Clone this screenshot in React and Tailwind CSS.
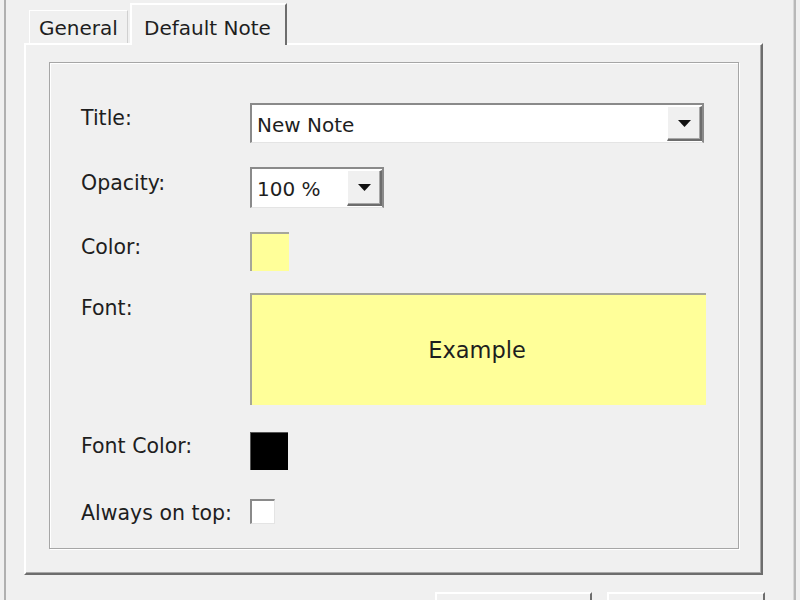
import React from "react";

const font = { fontFamily: '"DejaVu Sans", Verdana, sans-serif' };

const Arrow = () => (
  <svg width="13" height="7" viewBox="0 0 13 7">
    <polygon points="0,0 13,0 6.5,7" fill="#111" />
  </svg>
);

const DropButton = () => (
  <div className="w-[35px] flex items-center justify-center bg-[#f0f0f0] border-t border-l border-white border-r-2 border-b-2 border-r-[#6d6d6d] border-b-[#6d6d6d] shadow-[inset_-1px_-1px_0_#a8a8a8]">
    <Arrow />
  </div>
);

const Combo = ({ value, className }) => (
  <div
    className={`flex bg-white border-t-2 border-l-2 border-r-2 border-[#8a8a8a] border-b border-b-[#e4e4e4] ${className}`}
  >
    <div className="flex-1 flex items-center pl-[5px] pt-[2px] text-[20px] text-[#1e1e1e]">
      {value}
    </div>
    <div className="flex py-[1px]">
      <DropButton />
    </div>
  </div>
);

const Row = ({ label, labelTop, className, children }) => (
  <div className={`flex items-start shrink-0 ${className}`}>
    <div
      className="w-[169px] shrink-0 text-[20.5px] leading-[24px] text-[#1e1e1e]"
      style={{ marginTop: labelTop }}
    >
      {label}
    </div>
    {children}
  </div>
);

export default function App() {
  return (
    <div
      className="w-[800px] h-[600px] bg-[#f0f0f0] overflow-hidden flex"
      style={font}
    >
      <div className="w-[4px] shrink-0" />
      <div className="w-[2px] shrink-0 bg-[#b0b0b0]" />

      <div className="w-[760px] shrink-0 flex flex-col pl-[18px]">
        {/* tabs */}
        <div className="h-[43px] shrink-0 flex items-end pl-[5px] relative z-10">
          <div className="w-[99px] h-[33px] flex items-center pl-[9px] pt-[2px] border-t border-l border-white border-r border-r-[#d0d0d0] text-[20px] text-[#1e1e1e]">
            General
          </div>
          <div className="w-[157px] h-[42px] -mb-[2px] ml-[2px] bg-[#f0f0f0] flex items-start pt-[8px] pl-[12px] border-t-2 border-l-2 border-white border-r-2 border-r-[#6d6d6d] text-[20px] text-[#1e1e1e]">
            Default Note
          </div>
        </div>

        {/* tab panel */}
        <div className="w-[739px] h-[532px] shrink-0 border-t-2 border-l-2 border-white border-r-2 border-b-2 border-r-[#6d6d6d] border-b-[#6d6d6d] shadow-[inset_-1px_-1px_0_#a8a8a8] pl-[23px] pt-[17px]">
          <div className="w-[690px] h-[487px] border border-[#a6a6a6] shadow-[1px_1px_0_#fff,inset_1px_1px_0_#fff] pl-[31px] pt-[40px] flex flex-col">
            <Row label="Title:" labelTop={3}>
              <Combo value="New Note" className="w-[454px] h-[40px]" />
            </Row>
            <Row label="Opacity:" labelTop={4} className="mt-[24px]">
              <Combo value="100 %" className="w-[134px] h-[41px]" />
            </Row>
            <Row label="Color:" labelTop={3} className="mt-[24px]">
              <div className="w-[39px] h-[39px] bg-[#ffff99] border-t-2 border-l-2 border-[#a6a69a]" />
            </Row>
            <Row label="Font:" labelTop={3} className="mt-[22px]">
              <div className="w-[456px] h-[112px] bg-[#ffff99] border-t-2 border-l-2 border-[#a6a69a] flex items-center justify-center pt-[2px] pr-[4px] text-[22.5px] text-[#1e1e1e]">
                Example
              </div>
            </Row>
            <Row label="Font Color:" labelTop={2} className="mt-[27px]">
              <div className="w-[38px] h-[38px] bg-black border-t border-l border-[#555]" />
            </Row>
            <Row label="Always on top:" labelTop={2} className="mt-[29px]">
              <div className="w-[25px] h-[25px] bg-white border-t-2 border-l-2 border-[#8a8a8a] border-r border-b border-r-[#e4e4e4] border-b-[#e4e4e4]" />
            </Row>
          </div>
        </div>

        {/* buttons */}
        <div className="flex shrink-0 mt-[17px] pl-[411px] gap-[15px]">
          <div className="w-[157px] h-[30px] border-t-2 border-l-2 border-white border-r-2 border-r-[#6d6d6d]" />
          <div className="w-[158px] h-[30px] border-t-2 border-l-2 border-white border-r-2 border-r-[#6d6d6d]" />
        </div>
      </div>

      <div className="w-[27px] shrink-0" />
      <div className="w-[3px] shrink-0 bg-[#b8b8b8] border-l border-[#d8d8d8]" />
    </div>
  );
}
